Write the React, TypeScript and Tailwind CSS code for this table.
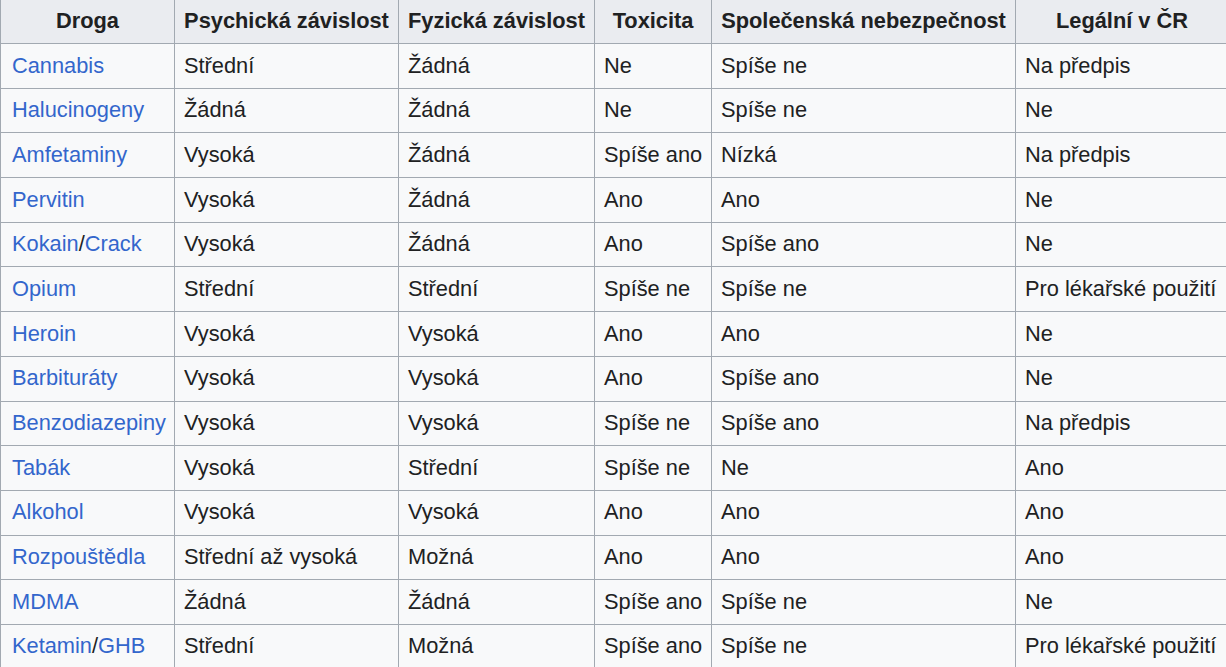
const headers = ['Droga', 'Psychická závislost', 'Fyzická závislost', 'Toxicita', 'Společenská nebezpečnost', 'Legální v ČR'];

type Row = { drug: string[]; cells: string[] };

const rows: Row[] = [
  { drug: ['Cannabis'], cells: ['Střední', 'Žádná', 'Ne', 'Spíše ne', 'Na předpis'] },
  { drug: ['Halucinogeny'], cells: ['Žádná', 'Žádná', 'Ne', 'Spíše ne', 'Ne'] },
  { drug: ['Amfetaminy'], cells: ['Vysoká', 'Žádná', 'Spíše ano', 'Nízká', 'Na předpis'] },
  { drug: ['Pervitin'], cells: ['Vysoká', 'Žádná', 'Ano', 'Ano', 'Ne'] },
  { drug: ['Kokain', 'Crack'], cells: ['Vysoká', 'Žádná', 'Ano', 'Spíše ano', 'Ne'] },
  { drug: ['Opium'], cells: ['Střední', 'Střední', 'Spíše ne', 'Spíše ne', 'Pro lékařské použití'] },
  { drug: ['Heroin'], cells: ['Vysoká', 'Vysoká', 'Ano', 'Ano', 'Ne'] },
  { drug: ['Barbituráty'], cells: ['Vysoká', 'Vysoká', 'Ano', 'Spíše ano', 'Ne'] },
  { drug: ['Benzodiazepiny'], cells: ['Vysoká', 'Vysoká', 'Spíše ne', 'Spíše ano', 'Na předpis'] },
  { drug: ['Tabák'], cells: ['Vysoká', 'Střední', 'Spíše ne', 'Ne', 'Ano'] },
  { drug: ['Alkohol'], cells: ['Vysoká', 'Vysoká', 'Ano', 'Ano', 'Ano'] },
  { drug: ['Rozpouštědla'], cells: ['Střední až vysoká', 'Možná', 'Ano', 'Ano', 'Ano'] },
  { drug: ['MDMA'], cells: ['Žádná', 'Žádná', 'Spíše ano', 'Spíše ne', 'Ne'] },
  { drug: ['Ketamin', 'GHB'], cells: ['Střední', 'Možná', 'Spíše ano', 'Spíše ne', 'Pro lékařské použití'] },
];

const widths = ['w-[174px]', 'w-[224px]', 'w-[196px]', 'w-[117px]', 'w-[304px]', 'w-[213px]'];

export default function App() {
  return (
    <div className="w-[1226px] h-[667px] overflow-hidden bg-white font-['Liberation_Sans',Arial,sans-serif] text-[21.8px] text-[#202122]">
      <table className="table-fixed border-collapse w-[1228px] bg-[#f8f9fa] -mt-px">
        <colgroup>
          {widths.map((w, i) => (
            <col key={i} className={w} />
          ))}
        </colgroup>
        <thead>
          <tr className="h-[44px]">
            {headers.map((h) => (
              <th key={h} className="border border-[#a2a9b1] bg-[#eaecf0] px-[9px] text-center font-bold whitespace-nowrap">
                {h}
              </th>
            ))}
          </tr>
        </thead>
        <tbody>
          {rows.map((r, i) => (
            <tr key={i} className="h-[44.7px]">
              <td className="border border-[#a2a9b1] pl-[11px] pr-[9px] whitespace-nowrap">
                {r.drug.map((d, j) => (
                  <span key={d}>
                    {j > 0 && '/'}
                    <a className="text-[#3366cc]">{d}</a>
                  </span>
                ))}
              </td>
              {r.cells.map((c, j) => (
                <td key={j} className="border border-[#a2a9b1] pl-[9px] pr-[9px] whitespace-nowrap">
                  {c}
                </td>
              ))}
            </tr>
          ))}
        </tbody>
      </table>
    </div>
  );
}
